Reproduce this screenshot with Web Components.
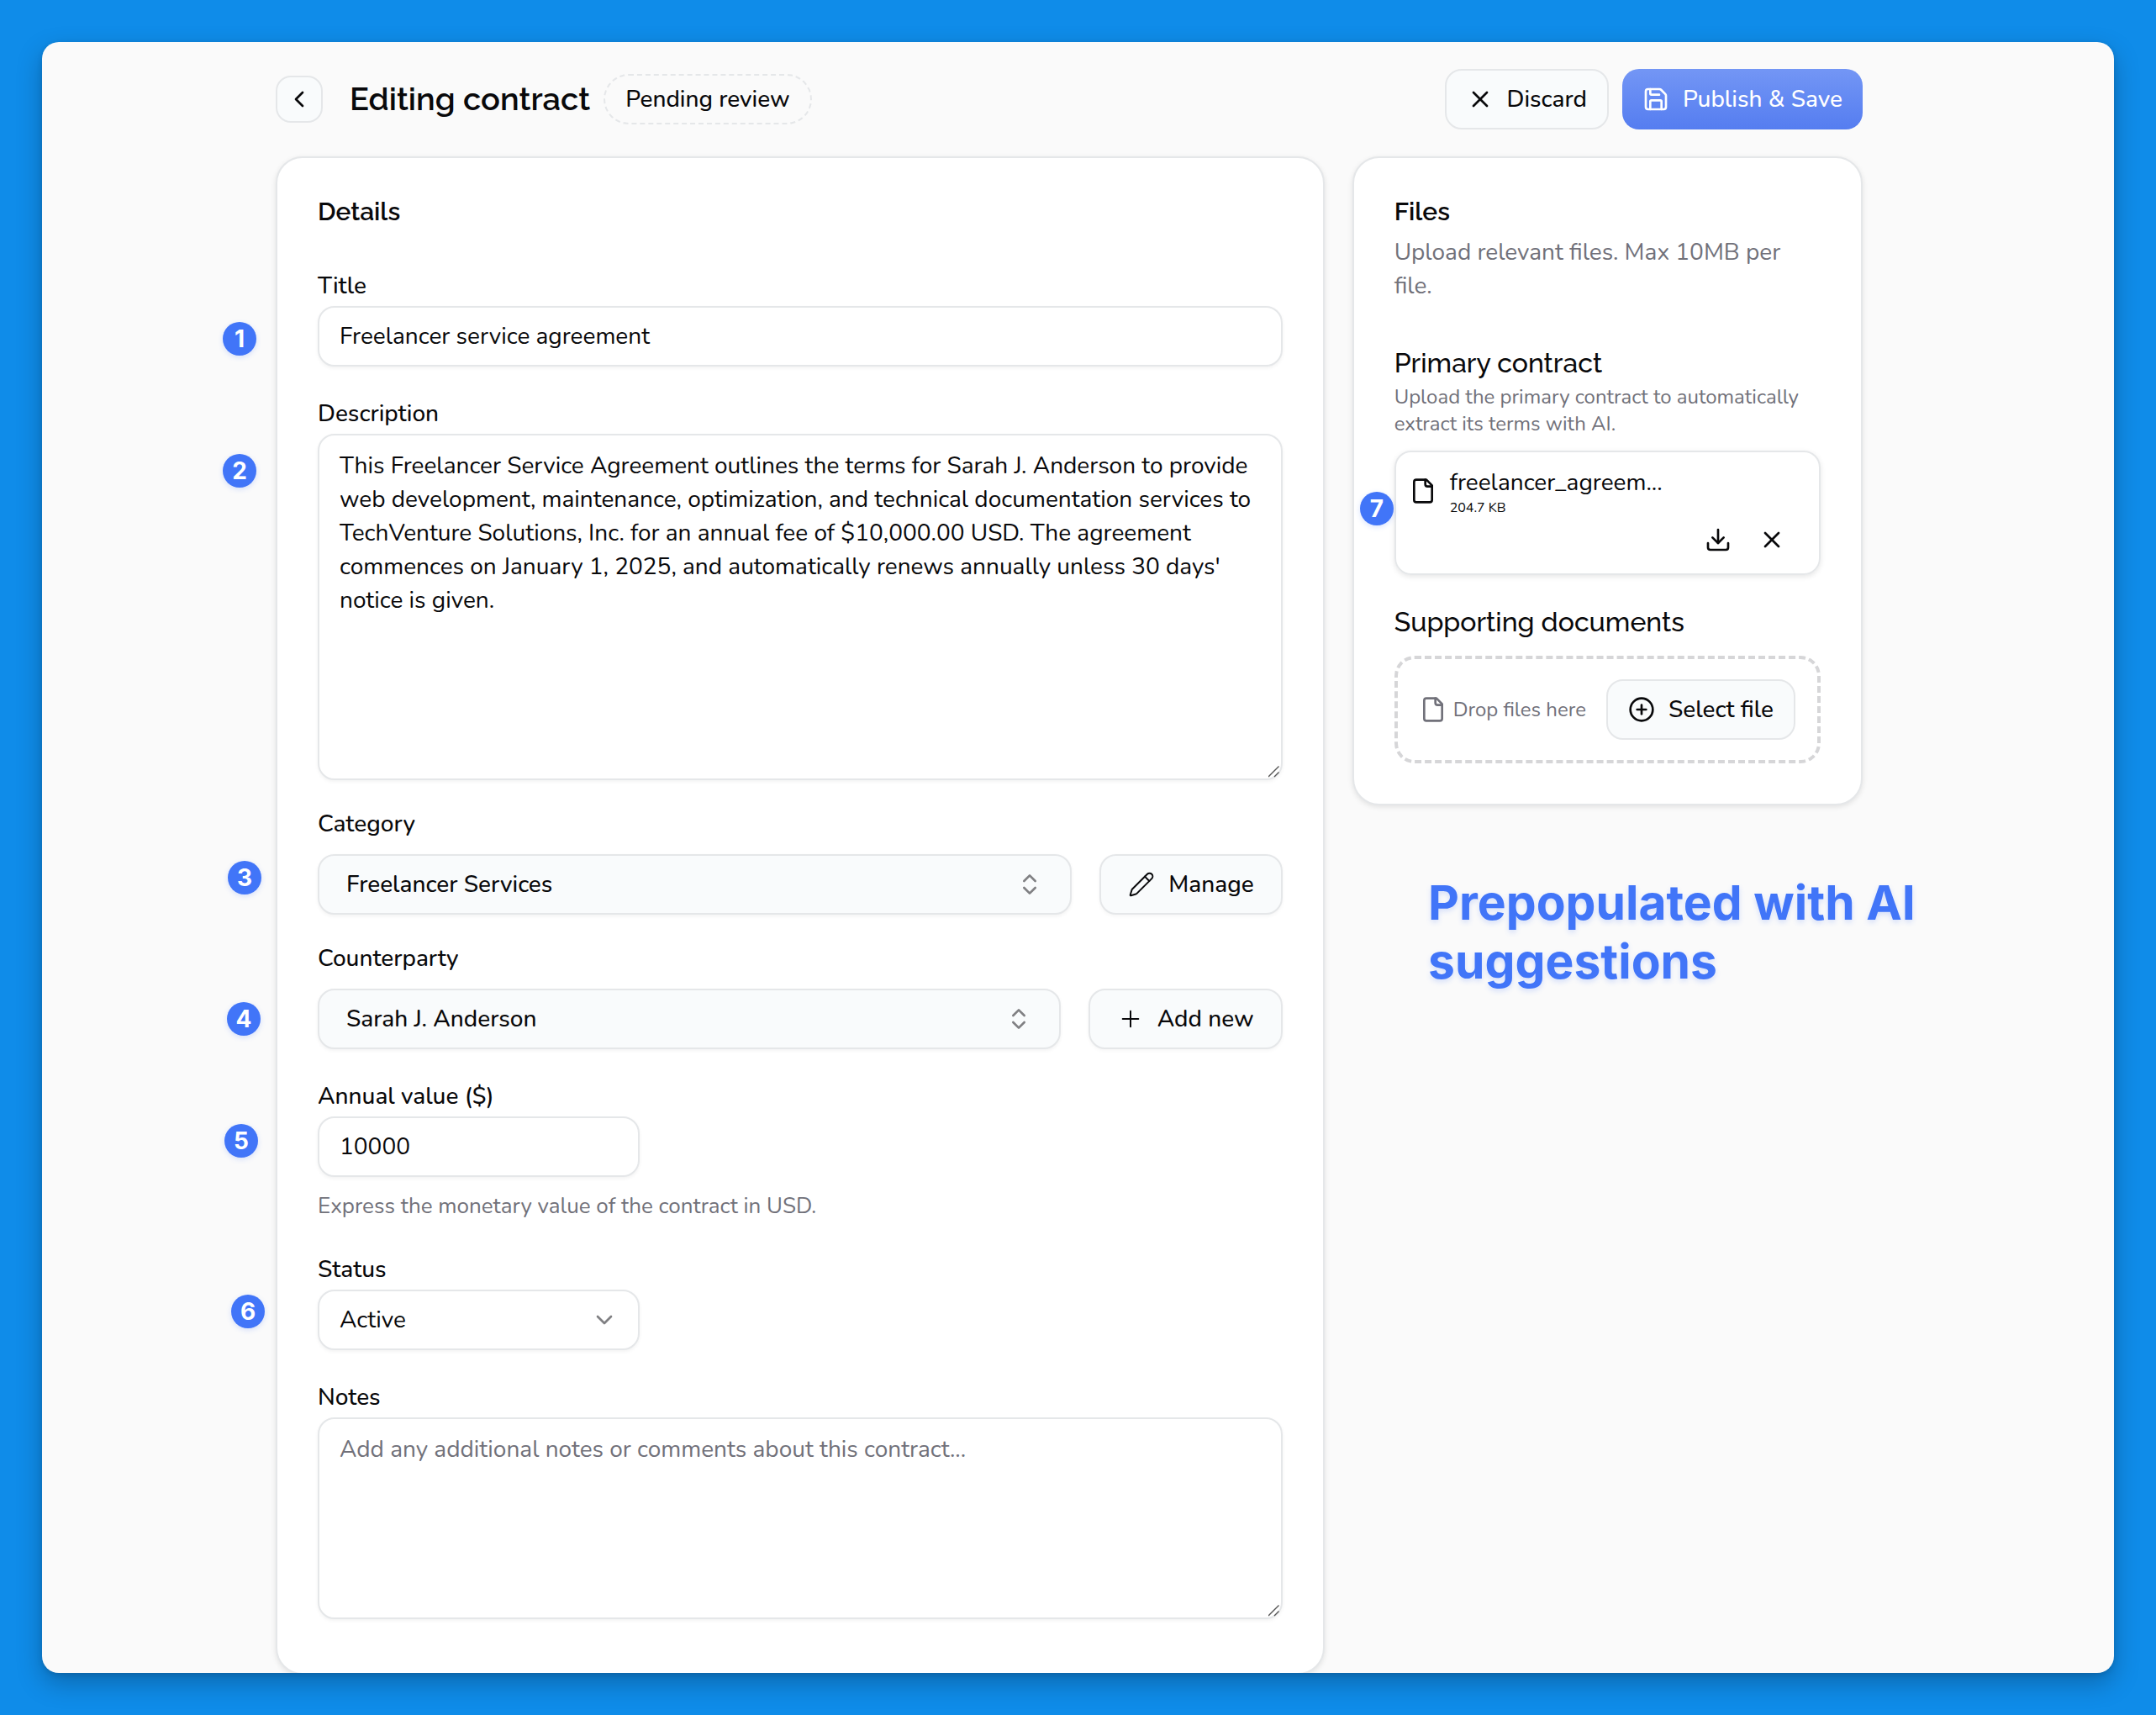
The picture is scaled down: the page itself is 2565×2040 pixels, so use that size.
<!DOCTYPE html>
<html lang="en">
<head>
<meta charset="utf-8">
<title>Editing contract</title>
<style>

*{
    box-sizing: border-box;
}

html{
    --ink: #09090b;
    --muted: #71717a;
    --line: #e5e7e9;
    --surface: #f9fbfc;
    --accent: #4175f8;
    --heading: Raleway, Lato, sans-serif;
    --body: Nunito, Lato, sans-serif;
}

body{
    margin: 0;
    background-color: #0f8ce9;
    color: var(--ink);
    font: 28px/40px var(--body);
}

</style>
</head>
<body>

<contract-page></contract-page>

<script>

const icons = {
    back: '<path d="m15 18-6-6 6-6"/>',
    close: '<path d="M18 6 6 18"/><path d="m6 6 12 12"/>',
    save: '<path d="M15.2 3a2 2 0 0 1 1.4.6l3.8 3.8a2 2 0 0 1 .6 1.4V19a2 2 0 0 1-2 2H5a2 2 0 0 1-2-2V5a2 2 0 0 1 2-2z"/><path d="M17 21v-7a1 1 0 0 0-1-1H8a1 1 0 0 0-1 1v7"/><path d="M7 3v4a1 1 0 0 0 1 1h7"/>',
    pencil: '<path d="M21.174 6.812a1 1 0 0 0-3.986-3.987L3.842 16.174a2 2 0 0 0-.5.83l-1.321 4.352a.5.5 0 0 0 .623.622l4.353-1.32a2 2 0 0 0 .83-.497z"/><path d="m15 5 4 4"/>',
    plus: '<path d="M5 12h14"/><path d="M12 5v14"/>',
    updown: '<path d="m7 15 5 5 5-5"/><path d="m7 9 5-5 5 5"/>',
    down: '<path d="m6 9 6 6 6-6"/>',
    file: '<path d="M15 2H6a2 2 0 0 0-2 2v16a2 2 0 0 0 2 2h12a2 2 0 0 0 2-2V7Z"/><path d="M14 2v4a2 2 0 0 0 2 2h4"/>',
    download: '<path d="M12 15V3"/><path d="M21 15v4a2 2 0 0 1-2 2H5a2 2 0 0 1-2-2v-4"/><path d="m7 10 5 5 5-5"/>',
    add: '<circle cx="12" cy="12" r="10"/><path d="M8 12h8"/><path d="M12 8v8"/>'
}

class AppIcon extends HTMLElement {

    connectedCallback(){
        if (this.shadowRoot) return
        this.attachShadow({mode:'open'})
        this.shadowRoot.innerHTML = `
<style>
:host{
    display: block;
    flex: none;
    width: 32px;
    height: 32px;
}

svg{
    display: block;
    width: 100%;
    height: 100%;
    fill: none;
    stroke: currentColor;
    stroke-width: 2;
    stroke-linecap: round;
    stroke-linejoin: round;
}

:host([thin]) svg{
    stroke-width: 1.5;
}
</style>
<svg viewBox="0 0 24 24" aria-hidden="true">${icons[this.getAttribute('name')]}</svg>
`
    }

}

class AppButton extends HTMLElement {

    connectedCallback(){
        if (this.shadowRoot) return
        const label = this.getAttribute('label')
        this.attachShadow({mode:'open'})
        this.shadowRoot.innerHTML = `
<style>
:host{
    display: block;
    flex: none;
}

button{
    box-sizing: border-box;
    display: flex;
    align-items: center;
    justify-content: center;
    gap: 16px;
    width: 100%;
    height: 72px;
    padding: 0 24px;
    border: 2px solid var(--line);
    border-radius: 20px;
    background-color: var(--surface);
    color: var(--ink);
    font: 500 28px/40px var(--body);
    white-space: nowrap;
    cursor: pointer;
}

:host([wide]) button{
    padding: 0 32px;
    box-shadow: 0 2px 4px rgba(0, 0, 0, .04);
}

:host([primary]) button{
    border: 0;
    background: linear-gradient(#7396f5, #557df0);
    color: #fff;
}

:host([square]) button{
    width: 56px;
    height: 56px;
    padding: 0;
    border-radius: 18px;
}

:host([ghost]) button{
    width: 64px;
    height: 56px;
    padding: 0;
    border: 0;
    background: none;
}
</style>
<button type="button" ${label ? `aria-label="${label}"` : ''}>
    <app-icon name="${this.getAttribute('icon')}" ${this.hasAttribute('wide') ? 'thin' : ''}></app-icon>
    <slot></slot>
</button>
`
        if (label) this.shadowRoot.querySelector('slot').remove()
    }

}

class FormField extends HTMLElement {

    connectedCallback(){
        if (this.shadowRoot) return
        this.attachShadow({mode:'open'})
        this.shadowRoot.innerHTML = `
<style>
*{
    box-sizing: border-box;
}

:host{
    display: block;
    margin-top: 40px;
}

:host([kind="combo"]){
    margin-top: 36px;
}

.label{
    display: block;
    margin-bottom: 8px;
    font-weight: 500;
    line-height: 32px;
}

:host([kind="combo"]) .label{
    margin-bottom: 20px;
}

.control{
    display: block;
    width: 100%;
    height: 72px;
    margin: 0;
    padding: 0 24px;
    border: 2px solid var(--line);
    border-radius: 20px;
    background-color: #fff;
    box-shadow: 0 2px 4px rgba(0, 0, 0, .05);
    color: var(--ink);
    font: 28px/40px var(--body);
}

textarea.control{
    height: auto;
    padding: 16px 24px;
    resize: vertical;
}

textarea::placeholder{
    color: var(--muted);
    opacity: 1;
}

textarea::-webkit-resizer{
    background: url("data:image/svg+xml,%3Csvg xmlns='http://www.w3.org/2000/svg' width='15' height='15' fill='none' stroke='%23555' stroke-width='1.4'%3E%3Cpath d='M0 13 12.500.5M7 13l5.500-5.500'/%3E%3C/svg%3E") no-repeat;
}

select.control{
    appearance: none;
}

:host([kind="combo"]) .control{
    padding: 0 32px;
    background-color: var(--surface);
    font-weight: 500;
}

.row{
    display: flex;
    gap: 33px;
}

.box{
    position: relative;
    flex: 1;
}

:host([short]) .box{
    flex: 0 0 calc(100% / 3);
}

.box app-icon{
    position: absolute;
    top: 20px;
    right: 26px;
    color: #808083;
    pointer-events: none;
}

:host([kind="combo"]) .box app-icon{
    right: 34px;
}

.hint{
    display: block;
    margin-top: 16px;
    color: var(--muted);
    font-size: 26px;
    line-height: 38px;
}
</style>
<label class="label" for="control">${this.getAttribute('label')}</label>
<div class="row">
    <div class="box">${this.control()}</div>
    <slot name="action"></slot>
</div>
${this.hasAttribute('hint') ? `<span class="hint">${this.getAttribute('hint')}</span>` : ''}
`
    }

    control(){
        const kind = this.getAttribute('kind')
        const value = this.getAttribute('value') || ''

        if (kind === 'area') {
            return `<textarea class="control" id="control" style="height: ${this.getAttribute('height')}" placeholder="${this.getAttribute('placeholder') || ''}" spellcheck="false">${value}</textarea>`
        }
        if (kind === 'select' || kind === 'combo') {
            return `<select class="control" id="control"><option>${value}</option></select>
            <app-icon name="${kind === 'combo' ? 'updown' : 'down'}"></app-icon>`
        }
        return `<input class="control" id="control" type="text" value="${value}">`
    }

}

class AppCard extends HTMLElement {

    connectedCallback(){
        if (this.shadowRoot) return
        this.attachShadow({mode:'open'})
        this.shadowRoot.innerHTML = `
<style>
:host{
    box-sizing: border-box;
    display: block;
    padding: 48px;
    border: 2px solid var(--line);
    border-radius: 32px;
    background-color: #fff;
    box-shadow: 0 2px 6px rgba(0, 0, 0, .1);
}

h2{
    margin: 0;
    font: 600 30px/32px var(--heading);
}
</style>
<h2>${this.getAttribute('heading')}</h2>
<slot></slot>
`
    }

}

class FileItem extends HTMLElement {

    connectedCallback(){
        if (this.shadowRoot) return
        this.attachShadow({mode:'open'})
        this.shadowRoot.innerHTML = `
<style>
:host{
    box-sizing: border-box;
    display: block;
    padding: 16px 24px 12px 16px;
    border: 2px solid var(--line);
    border-radius: 20px;
    box-shadow: 0 2px 6px rgba(0, 0, 0, .1);
}

.file{
    display: flex;
    align-items: center;
    gap: 16px;
}

.name{
    line-height: 40px;
}

.size{
    font-size: 16px;
    line-height: 20px;
}

.actions{
    display: flex;
    justify-content: flex-end;
}
</style>
<div class="file">
    <app-icon name="file"></app-icon>
    <div>
        <div class="name">${this.getAttribute('name')}</div>
        <div class="size">${this.getAttribute('size')}</div>
    </div>
</div>
<div class="actions">
    <app-button ghost icon="download" label="Download"></app-button>
    <app-button ghost icon="close" label="Remove"></app-button>
</div>
`
    }

}

class DropZone extends HTMLElement {

    connectedCallback(){
        if (this.shadowRoot) return
        this.attachShadow({mode:'open'})
        this.shadowRoot.innerHTML = `
<style>
:host{
    box-sizing: border-box;
    display: flex;
    align-items: center;
    justify-content: space-between;
    padding: 24px 26px;
    border: 4px dashed #d6d6d8;
    border-radius: 24px;
}

.hint{
    display: flex;
    align-items: center;
    gap: 8px;
    color: var(--muted);
    font-size: 24px;
    line-height: 32px;
    white-space: nowrap;
}
</style>
<span class="hint"><app-icon name="file"></app-icon>Drop files here</span>
<app-button icon="add">Select file</app-button>
`
    }

}

/* numbered callout that floats over the page */
class NumberPin extends HTMLElement {

    connectedCallback(){
        if (this.shadowRoot) return
        this.attachShadow({mode:'open'})
        this.shadowRoot.innerHTML = `
<style>
:host{
    position: absolute;
    display: flex;
    align-items: center;
    justify-content: center;
    width: 40px;
    height: 40px;
    border-radius: 50%;
    background-color: var(--accent);
    box-shadow: 0 2px 6px rgba(65, 117, 248, .2);
    color: #fff;
    font: 700 28px/40px Inter, sans-serif;
}
</style>
<slot></slot>
`
    }

}

const templatePage = document.createElement('template')

templatePage.innerHTML = `

<style>

*{
    box-sizing: border-box;
}

:host{
    display: block;
    height: 100vh;
    padding: 50px;
}

.window{
    height: 100%;
    padding: 32px 21px 0 0;
    overflow: hidden;
    border-radius: 20px;
    background-color: #fafafa;
    box-shadow: 0 2px 6px rgba(0, 0, 0, .12), 0 12px 30px rgba(0, 0, 0, .25);
}

.content{
    position: relative;
    max-width: 1888px;
    margin: 0 auto;
}

header{
    display: flex;
    align-items: center;
    gap: 16px;
    margin-bottom: 32px;
}

h1{
    margin: 0 0 0 16px;
    font: 600 38px/48px var(--heading);
}

.badge{
    margin-right: auto;
    padding: 8px 24px;
    border: 2px dashed var(--line);
    border-radius: 30px;
    font-weight: 500;
}

main{
    display: grid;
    grid-template-columns: repeat(3, 1fr);
    gap: 33px;
    align-items: start;
}

.details{
    grid-column: span 2;
    padding-bottom: 64px;
}

.details form-field:first-of-type{
    margin-top: 56px;
}

h3{
    margin: 0;
    font: 500 32px/32px var(--heading);
}

p{
    margin: 0;
    color: var(--muted);
}

.lead{
    margin: 12px 0 56px;
}

.small{
    margin: 8px 0 16px;
    font-size: 24px;
    line-height: 32px;
}

file-item{
    margin-bottom: 40px;
}

drop-zone{
    margin-top: 24px;
}

.caption{
    position: absolute;
    top: 957px;
    left: 1371px;
    width: 640px;
    color: var(--accent);
    font: 700 57px/70px Inter, sans-serif;
    text-shadow: 0 3px 6px rgba(65, 117, 248, .2);
}

</style>

<div class="window">
    <div class="content">
        <header>
            <app-button square icon="back" label="Back"></app-button>
            <h1>Editing contract</h1>
            <span class="badge">Pending review</span>
            <app-button icon="close">Discard</app-button>
            <app-button primary icon="save">Publish &amp; Save</app-button>
        </header>

        <main>
            <app-card class="details" heading="Details">
                <form-field label="Title" value="Freelancer service agreement"></form-field>
                <form-field kind="area" height="412px" label="Description" value="This Freelancer Service Agreement outlines the terms for Sarah J. Anderson to provide web development, maintenance, optimization, and technical documentation services to TechVenture Solutions, Inc. for an annual fee of $10,000.00 USD. The agreement commences on January 1, 2025, and automatically renews annually unless 30 days' notice is given."></form-field>
                <form-field kind="combo" label="Category" value="Freelancer Services">
                    <app-button slot="action" wide icon="pencil">Manage</app-button>
                </form-field>
                <form-field kind="combo" label="Counterparty" value="Sarah J. Anderson">
                    <app-button slot="action" wide icon="plus">Add new</app-button>
                </form-field>
                <form-field short label="Annual value ($)" value="10000" hint="Express the monetary value of the contract in USD."></form-field>
                <form-field short kind="select" label="Status" value="Active"></form-field>
                <form-field kind="area" height="240px" label="Notes" placeholder="Add any additional notes or comments about this contract..."></form-field>
            </app-card>

            <app-card heading="Files">
                <p class="lead">Upload relevant files. Max 10MB per file.</p>
                <h3>Primary contract</h3>
                <p class="small">Upload the primary contract to automatically extract its terms with AI.</p>
                <file-item name="freelancer_agreem..." size="204.7 KB"></file-item>
                <h3>Supporting documents</h3>
                <drop-zone></drop-zone>
            </app-card>
        </main>

        <number-pin style="top: 301px; left: -63px">1</number-pin>
        <number-pin style="top: 458px; left: -63px">2</number-pin>
        <number-pin style="top: 942px; left: -57px">3</number-pin>
        <number-pin style="top: 1110px; left: -58px">4</number-pin>
        <number-pin style="top: 1255px; left: -61px">5</number-pin>
        <number-pin style="top: 1458px; left: -53px">6</number-pin>
        <number-pin style="top: 503px; left: 1290px">7</number-pin>
        <div class="caption">Prepopulated with AI suggestions</div>
    </div>
</div>
`

class ContractPage extends HTMLElement {

    constructor(){
        super()

        this.attachShadow({mode:'open'})
        this.shadowRoot.appendChild(templatePage.content.cloneNode(true))

    }

}

window.customElements.define('app-icon', AppIcon)
window.customElements.define('app-button', AppButton)
window.customElements.define('form-field', FormField)
window.customElements.define('app-card', AppCard)
window.customElements.define('file-item', FileItem)
window.customElements.define('drop-zone', DropZone)
window.customElements.define('number-pin', NumberPin)
window.customElements.define('contract-page', ContractPage)

</script>
</body>
</html>
